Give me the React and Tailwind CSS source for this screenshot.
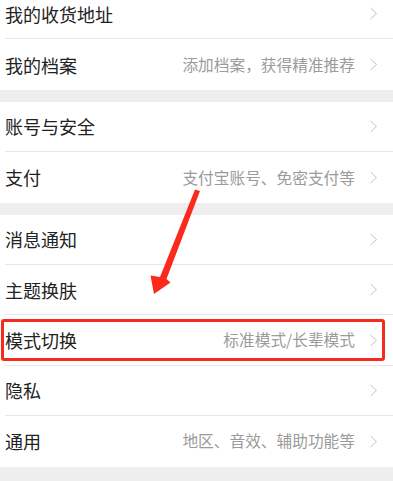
import React from 'react'

const font = { fontFamily: '"Noto Sans CJK SC", "Noto Sans", sans-serif' }

function Chevron() {
  return (
    <svg width="9" height="13" viewBox="0 0 9 13" className="shrink-0">
      <path d="M1.5 1 L7.5 6.5 L1.5 12" fill="none" stroke="#c2c2c2" strokeWidth="1" />
    </svg>
  )
}

function Row({ title, hint, last, highlight }) {
  return (
    <div className="relative pl-[5px]">
      <div className={`h-[50.4px] flex items-center pr-[15px] ${last ? '' : 'border-b border-[#e6e6e6]'}`}>
        <span className="text-[18px] text-[#222222] leading-none flex-1">{title}</span>
        {hint && <span className="text-[15.7px] text-[#9b9b9b] leading-none mr-[14px]">{hint}</span>}
        <Chevron />
      </div>
      {highlight && (
        <div className="absolute left-[1px] right-[8px] top-[4px] bottom-[5px] border-[3px] border-[#f72a1e] rounded-[3px]" />
      )}
    </div>
  )
}

function Group({ children }) {
  return <div className="bg-white">{children}</div>
}

export default function App() {
  return (
    <div className="relative w-[393px] h-[481px] overflow-hidden bg-[#eeeeee]" style={font}>
      <div className="-mt-[11px]">
        <Group>
          <Row title="我的收货地址" />
          <Row title="我的档案" hint="添加档案，获得精准推荐" last />
        </Group>
        <div className="h-[12px]" />
        <Group>
          <Row title="账号与安全" />
          <Row title="支付" hint="支付宝账号、免密支付等" last />
        </Group>
        <div className="h-[12px]" />
        <Group>
          <Row title="消息通知" />
          <Row title="主题换肤" />
          <Row title="模式切换" hint="标准模式/长辈模式" highlight />
          <Row title="隐私" />
          <Row title="通用" hint="地区、音效、辅助功能等" last />
        </Group>
      </div>

      {/* red arrow */}
      <svg className="absolute left-0 top-0 pointer-events-none" width="393" height="481" viewBox="0 0 393 481">
        <polygon
          points="195,189.5 200,191 166.5,279 170.5,282.5 154,294 150.5,275.5 160,277"
          fill="#fb2a1c"
        />
      </svg>
    </div>
  )
}
